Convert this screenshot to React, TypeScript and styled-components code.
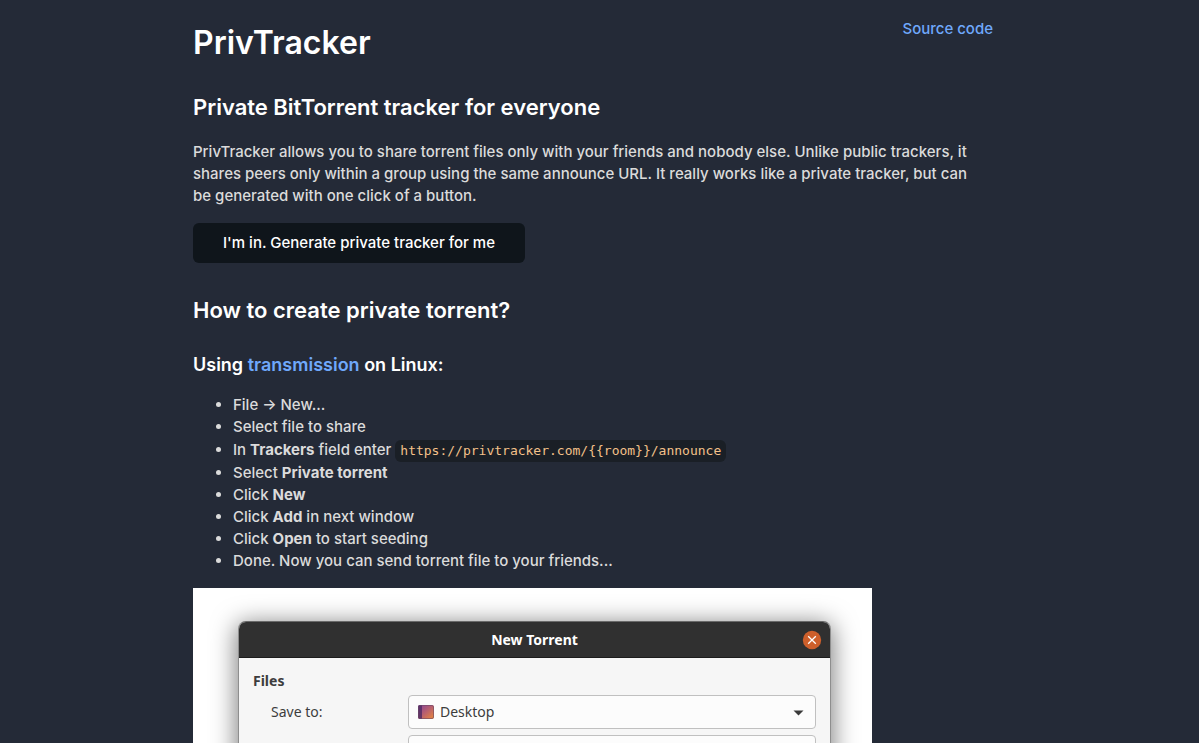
import React from "react";
import styled, { createGlobalStyle } from "styled-components";

const GlobalStyle = createGlobalStyle`
  *, *::before, *::after { box-sizing: border-box; }
  body {
    margin: 0;
    background: #242a37;
    color: #dbdbdb;
    font-family: Inter, "Liberation Sans", sans-serif;
    font-size: 15px;
    font-weight: 500;
    line-height: 22px;
  }
  b { font-weight: 700; }
`;

const Page = styled.div`
  height: 100vh;
  overflow: hidden;
  padding: 20px 13px 0 0;
`;

const Content = styled.main`
  max-width: 800px;
  margin: 0 auto;
`;

const Header = styled.header`
  display: flex;
  justify-content: space-between;
  align-items: flex-start;
`;

const Link = styled.a`
  color: #6fa8fb;
  text-decoration: none;
  &:hover { text-decoration: underline; }
`;

const SourceLink = styled(Link)`
  line-height: 18px;
`;

const Title = styled.h1`
  margin: 0;
  color: #fff;
  font-size: 32px;
  line-height: 46px;
  font-weight: 600;
`;

const Heading = styled.h2`
  margin: 24px 0 0;
  color: #fff;
  font-size: 22px;
  line-height: 34px;
  font-weight: 600;
`;

const SubHeading = styled.h3`
  margin: 25px 0 16px;
  color: #fff;
  font-size: 18px;
  line-height: 26px;
  font-weight: 600;
`;

const Paragraph = styled.p`
  margin: 17px 0 16px;
  padding-right: 16px;
`;

const Button = styled.button`
  display: block;
  height: 40px;
  margin: 0 0 30px;
  padding: 0 30px;
  border: 0;
  border-radius: 6px;
  background: #0f151b;
  color: #fff;
  font: inherit;
  cursor: pointer;
`;

const Steps = styled.ul`
  margin: 0 0 16px;
  padding-left: 40px;
`;

const Code = styled.code`
  display: inline-block;
  margin: 2px 0 0;
  padding: 0 5px;
  border-radius: 6px;
  background: #1a1f26;
  color: #f3c18a;
  font-family: "DejaVu Sans Mono", "Liberation Mono", monospace;
  font-size: 13px;
  line-height: 22px;
`;

const Figure = styled.figure`
  max-width: 679px;
  margin: 0;
  padding: 33px 41px 60px 45px;
  background: #fff;
`;

const Dialog = styled.section`
  border: 1px solid #8e8e8e;
  border-top-color: #6a6a6a;
  border-radius: 8px 8px 0 0;
  background: #f6f6f6;
  color: #3d3d3d;
  font-family: "Noto Sans", "Open Sans", sans-serif;
  font-size: 14px;
  font-weight: 400;
  box-shadow: 0 4px 24px 2px rgba(0, 0, 0, 0.5);
`;

const TitleBar = styled.div`
  display: grid;
  grid-template-columns: 1fr auto 1fr;
  align-items: center;
  height: 36px;
  padding: 0 8px;
  border-bottom: 1px solid #1c1c1c;
  border-radius: 7px 7px 0 0;
  background: #303030;
`;

const DialogTitle = styled.strong`
  grid-column: 2;
  color: #fff;
  font-weight: 700;
`;

const CloseButton = styled.button`
  justify-self: end;
  display: flex;
  width: 20px;
  height: 20px;
  padding: 0;
  border: 0;
  background: none;
  cursor: pointer;
`;

const Form = styled.form`
  padding: 12px 14px;
`;

const GroupTitle = styled.strong`
  display: block;
  font-weight: 700;
`;

const Row = styled.div`
  display: grid;
  grid-template-columns: 137px 1fr;
  align-items: center;
  margin: 3px 0 6px;
  padding-left: 18px;
`;

const SelectBox = styled.div`
  position: relative;
`;

const Select = styled.select<{ $withIcon?: boolean }>`
  display: block;
  appearance: none;
  width: 100%;
  height: 34px;
  padding: 0 30px 0 ${(p) => (p.$withIcon ? 31 : 9)}px;
  border: 1px solid #c0c0c0;
  border-radius: 4px;
  background: #fcfcfc;
  color: #3d3d3d;
  font: inherit;
`;

const FolderIcon = styled.svg`
  position: absolute;
  left: 10px;
  top: 10px;
  pointer-events: none;
`;

const Caret = styled.svg`
  position: absolute;
  right: 12px;
  top: 15px;
  pointer-events: none;
`;

function CaretDown() {
  return (
    <Caret width="11" height="6" viewBox="0 0 11 6" aria-hidden="true">
      <path d="M.5.5h10L5.5 5.5z" fill="#3a3a3a" />
    </Caret>
  );
}

function TorrentDialog() {
  return (
    <Dialog aria-label="New Torrent">
      <TitleBar>
        <DialogTitle>New Torrent</DialogTitle>
        <CloseButton type="button" aria-label="Close">
          <svg width="20" height="20" viewBox="0 0 20 20" aria-hidden="true">
            <circle cx="10" cy="10" r="9.2" fill="#cd5f2b" />
            <path d="M6.2 6.2l7.6 7.6M13.8 6.2l-7.6 7.6" stroke="#fff" strokeWidth="1.3" />
          </svg>
        </CloseButton>
      </TitleBar>
      <Form>
        <GroupTitle>Files</GroupTitle>
        <Row>
          <label htmlFor="save-to">Save to:</label>
          <SelectBox>
            <Select id="save-to" $withIcon>
              <option>Desktop</option>
            </Select>
            <FolderIcon width="16" height="14" viewBox="0 0 16 14" aria-hidden="true">
              <defs>
                <linearGradient id="wallpaper" x1="0" y1="0" x2="1" y2="1">
                  <stop offset="0" stopColor="#84409a" />
                  <stop offset="0.5" stopColor="#b9606e" />
                  <stop offset="1" stopColor="#ec8a38" />
                </linearGradient>
              </defs>
              <rect width="16" height="14" rx="2" fill="url(#wallpaper)" />
              <path d="M2 0h2v14H2a2 2 0 0 1-2-2V2a2 2 0 0 1 2-2z" fill="#4f2a63" fillOpacity="0.8" />
              <rect x="0.5" y="0.5" width="15" height="13" rx="1.5" fill="none" stroke="#6b4a66" strokeOpacity="0.6" />
            </FolderIcon>
            <CaretDown />
          </SelectBox>
        </Row>
        <Row>
          <span />
          <SelectBox>
            <Select aria-label="Source" />
            <CaretDown />
          </SelectBox>
        </Row>
      </Form>
    </Dialog>
  );
}

export default function App() {
  return (
    <>
      <GlobalStyle />
      <Page>
        <Content>
          <Header>
            <Title>PrivTracker</Title>
            <SourceLink href="#source">Source code</SourceLink>
          </Header>
          <Heading>Private BitTorrent tracker for everyone</Heading>
          <Paragraph>
            PrivTracker allows you to share torrent files only with your friends and nobody else.
            Unlike public trackers, it shares peers only within a group using the same announce
            URL. It really works like a private tracker, but can be generated with one click of a
            button.
          </Paragraph>
          <Button type="button">I'm in. Generate private tracker for me</Button>
          <Heading>How to create private torrent?</Heading>
          <SubHeading>
            Using <Link href="#transmission">transmission</Link> on Linux:
          </SubHeading>
          <Steps>
            <li>File → New...</li>
            <li>Select file to share</li>
            <li>
              In <b>Trackers</b> field enter{" "}
              <Code>{"https://privtracker.com/{{room}}/announce"}</Code>
            </li>
            <li>Select <b>Private torrent</b></li>
            <li>Click <b>New</b></li>
            <li>Click <b>Add</b> in next window</li>
            <li>Click <b>Open</b> to start seeding</li>
            <li>Done. Now you can send torrent file to your friends...</li>
          </Steps>
          <Figure>
            <TorrentDialog />
          </Figure>
        </Content>
      </Page>
    </>
  );
}
